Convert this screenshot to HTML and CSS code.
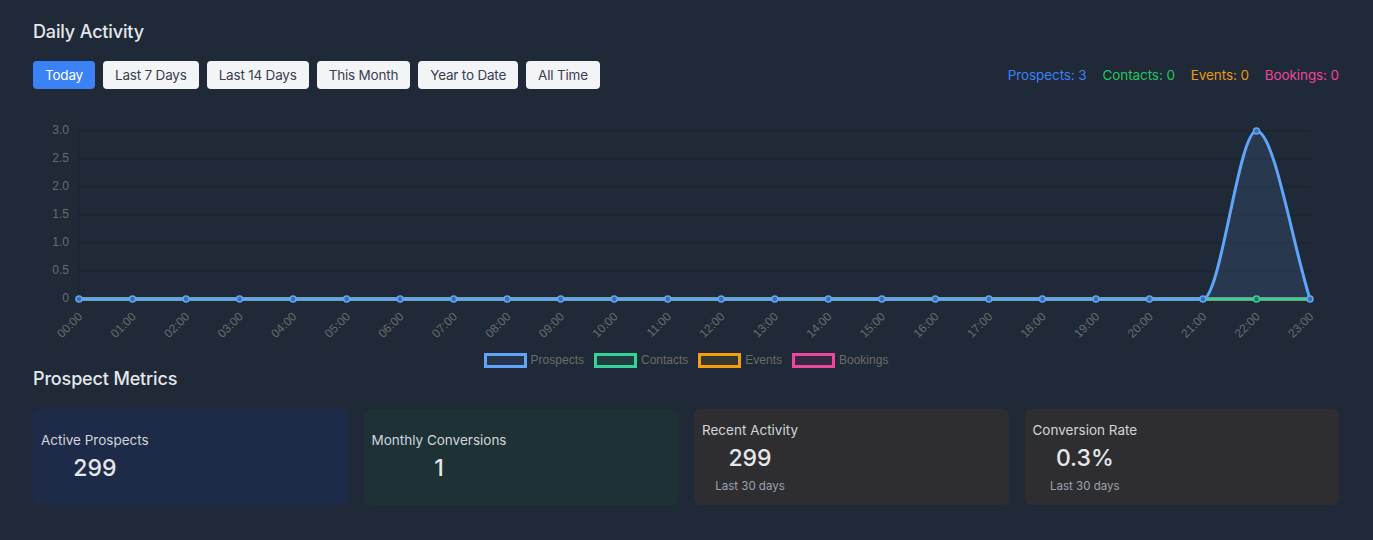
FILE: index.html
```html
<!DOCTYPE html>
<html lang="en">
<head>
<meta charset="utf-8">
<title>Daily Activity</title>
<link rel="stylesheet" href="styles.css">
</head>
<body>
<main class="page">
  <section class="activity">
    <h2 class="section-title">Daily Activity</h2>
    <div class="toolbar">
      <div class="ranges">
        <button class="range active">Today</button>
        <button class="range">Last 7 Days</button>
        <button class="range">Last 14 Days</button>
        <button class="range">This Month</button>
        <button class="range">Year to Date</button>
        <button class="range">All Time</button>
      </div>
      <div class="totals">
        <span class="total t-prospects">Prospects: 3</span>
        <span class="total t-contacts">Contacts: 0</span>
        <span class="total t-events">Events: 0</span>
        <span class="total t-bookings">Bookings: 0</span>
      </div>
    </div>
    <div class="chart">
      <svg class="chart-svg" width="1306" height="264" viewBox="0 0 1306 264">
        <g class="grid">
          <line x1="46" y1="42" x2="1277" y2="42"/>
          <line x1="46" y1="70" x2="1277" y2="70"/>
          <line x1="46" y1="98" x2="1277" y2="98"/>
          <line x1="46" y1="126" x2="1277" y2="126"/>
          <line x1="46" y1="154" x2="1277" y2="154"/>
          <line x1="46" y1="182" x2="1277" y2="182"/>
          <line x1="46" y1="42" x2="46" y2="210"/>
        </g>
        <g class="yticks">
          <text x="36" y="42">3.0</text>
          <text x="36" y="70">2.5</text>
          <text x="36" y="98">2.0</text>
          <text x="36" y="126">1.5</text>
          <text x="36" y="154">1.0</text>
          <text x="36" y="182">0.5</text>
          <text x="36" y="210">0</text>
        </g>
        <g class="xticks">
          <text transform="translate(48,226) rotate(-45)">00:00</text>
          <text transform="translate(101.52,226) rotate(-45)">01:00</text>
          <text transform="translate(155.04,226) rotate(-45)">02:00</text>
          <text transform="translate(208.57,226) rotate(-45)">03:00</text>
          <text transform="translate(262.09,226) rotate(-45)">04:00</text>
          <text transform="translate(315.61,226) rotate(-45)">05:00</text>
          <text transform="translate(369.13,226) rotate(-45)">06:00</text>
          <text transform="translate(422.65,226) rotate(-45)">07:00</text>
          <text transform="translate(476.17,226) rotate(-45)">08:00</text>
          <text transform="translate(529.70,226) rotate(-45)">09:00</text>
          <text transform="translate(583.22,226) rotate(-45)">10:00</text>
          <text transform="translate(636.74,226) rotate(-45)">11:00</text>
          <text transform="translate(690.26,226) rotate(-45)">12:00</text>
          <text transform="translate(743.78,226) rotate(-45)">13:00</text>
          <text transform="translate(797.30,226) rotate(-45)">14:00</text>
          <text transform="translate(850.83,226) rotate(-45)">15:00</text>
          <text transform="translate(904.35,226) rotate(-45)">16:00</text>
          <text transform="translate(957.87,226) rotate(-45)">17:00</text>
          <text transform="translate(1011.39,226) rotate(-45)">18:00</text>
          <text transform="translate(1064.91,226) rotate(-45)">19:00</text>
          <text transform="translate(1118.43,226) rotate(-45)">20:00</text>
          <text transform="translate(1171.96,226) rotate(-45)">21:00</text>
          <text transform="translate(1225.48,226) rotate(-45)">22:00</text>
          <text transform="translate(1279.00,226) rotate(-45)">23:00</text>
        </g>
        <path class="line-bookings" d="M46,210 H1277"/>
        <path class="line-events" d="M46,210 H1277"/>
        <path class="line-contacts" d="M46,210 H1277"/>
        <circle class="pt-contacts" cx="1223.48" cy="210" r="3"/>
        <path class="area-prospects" d="M46,210 L1169.96,210 C1187.80,210 1205.64,42 1223.48,42 C1241.32,42 1259.16,154 1277,210 Z"/>
        <path class="line-prospects" d="M46,210 L1169.96,210 C1187.80,210 1205.64,42 1223.48,42 C1241.32,42 1259.16,154 1277,210"/>
        <g class="pts-prospects">
          <circle cx="46" cy="210" r="3"/>
          <circle cx="99.52" cy="210" r="3"/>
          <circle cx="153.04" cy="210" r="3"/>
          <circle cx="206.57" cy="210" r="3"/>
          <circle cx="260.09" cy="210" r="3"/>
          <circle cx="313.61" cy="210" r="3"/>
          <circle cx="367.13" cy="210" r="3"/>
          <circle cx="420.65" cy="210" r="3"/>
          <circle cx="474.17" cy="210" r="3"/>
          <circle cx="527.70" cy="210" r="3"/>
          <circle cx="581.22" cy="210" r="3"/>
          <circle cx="634.74" cy="210" r="3"/>
          <circle cx="688.26" cy="210" r="3"/>
          <circle cx="741.78" cy="210" r="3"/>
          <circle cx="795.30" cy="210" r="3"/>
          <circle cx="848.83" cy="210" r="3"/>
          <circle cx="902.35" cy="210" r="3"/>
          <circle cx="955.87" cy="210" r="3"/>
          <circle cx="1009.39" cy="210" r="3"/>
          <circle cx="1062.91" cy="210" r="3"/>
          <circle cx="1116.43" cy="210" r="3"/>
          <circle cx="1169.96" cy="210" r="3"/>
          <circle cx="1223.48" cy="42" r="3"/>
          <circle cx="1277" cy="210" r="3"/>
        </g>
      </svg>
      <div class="legend">
        <span class="legend-item"><span class="swatch sw-prospects"></span>Prospects</span>
        <span class="legend-item"><span class="swatch sw-contacts"></span>Contacts</span>
        <span class="legend-item"><span class="swatch sw-events"></span>Events</span>
        <span class="legend-item"><span class="swatch sw-bookings"></span>Bookings</span>
      </div>
    </div>
  </section>

  <section class="metrics">
    <h2 class="section-title">Prospect Metrics</h2>
    <div class="cards">
      <div class="card card-blue">
        <div class="card-body">
          <div class="card-label">Active Prospects</div>
          <div class="card-value">299</div>
        </div>
      </div>
      <div class="card card-green">
        <div class="card-body">
          <div class="card-label">Monthly Conversions</div>
          <div class="card-value">1</div>
        </div>
      </div>
      <div class="card card-gray">
        <div class="card-body">
          <div class="card-label">Recent Activity</div>
          <div class="card-value">299</div>
          <div class="card-sub">Last 30 days</div>
        </div>
      </div>
      <div class="card card-gray">
        <div class="card-body">
          <div class="card-label">Conversion Rate</div>
          <div class="card-value">0.3%</div>
          <div class="card-sub">Last 30 days</div>
        </div>
      </div>
    </div>
  </section>
</main>
</body>
</html>
```
FILE: styles.css
```css
* {
  box-sizing: border-box;
}

html, body {
  margin: 0;
  background: #1f2937;
}

body {
  font-family: Inter, "Noto Sans", "Liberation Sans", sans-serif;
  color: #e5e7eb;
}

.page {
  padding: 21px 34px 0 33px;
}

.section-title {
  margin: 0;
  font-size: 18px;
  line-height: 22px;
  font-weight: 500;
  letter-spacing: -0.15px;
  color: #e5e7eb;
}

.toolbar {
  margin-top: 18px;
  display: flex;
  justify-content: space-between;
  align-items: center;
}

.ranges {
  display: flex;
  gap: 8px;
}

.range {
  height: 28px;
  padding: 0 12px;
  border: 0;
  border-radius: 4px;
  background: #f3f4f6;
  color: #374151;
  font-family: inherit;
  font-size: 13.5px;
  letter-spacing: -0.2px;
  line-height: 28px;
}

.range.active {
  background: #3b82f6;
  color: #ffffff;
}

.totals {
  display: flex;
  gap: 16px;
  font-size: 13.5px;
  letter-spacing: -0.1px;
  line-height: 20px;
}

.t-prospects { color: #3b82f6; }
.t-contacts { color: #22c55e; }
.t-events { color: #e99a12; }
.t-bookings { color: #ec4899; }

.chart-svg {
  display: block;
  font-family: "Liberation Sans", Arial, sans-serif;
  font-size: 12px;
}

.grid line {
  stroke: rgba(0, 0, 0, 0.14);
  stroke-width: 1;
}

.yticks text {
  fill: #6b6b6b;
  text-anchor: end;
  dominant-baseline: middle;
}

.xticks text {
  fill: #6b6b6b;
  text-anchor: end;
  dominant-baseline: middle;
}

.line-bookings, .line-events, .line-contacts, .line-prospects {
  fill: none;
  stroke-width: 3;
}

.line-bookings { stroke: #ec4899; }
.line-events { stroke: #f59e0b; }
.line-contacts { stroke: #34d399; }
.line-prospects { stroke: #60a5fa; stroke-linejoin: round; }

.area-prospects {
  fill: rgba(96, 165, 250, 0.13);
}

.pt-contacts {
  fill: #2a6b5a;
  stroke: #34d399;
  stroke-width: 1.5;
}

.pts-prospects circle {
  fill: #3b6fa8;
  stroke: #60a5fa;
  stroke-width: 1.5;
}

.legend {
  display: flex;
  justify-content: center;
  gap: 10px;
  height: 15px;
  font-family: "Liberation Sans", Arial, sans-serif;
  font-size: 12px;
  line-height: 15px;
  color: #6b6b6b;
}

.legend-item {
  display: flex;
  align-items: center;
}

.swatch {
  width: 43px;
  height: 15px;
  border: 3px solid;
  margin-right: 4px;
}

.sw-prospects { border-color: #60a5fa; background: #26354b; }
.sw-contacts { border-color: #34d399; background: #223b3f; }
.sw-events { border-color: #f59e0b; background: #37362f; }
.sw-bookings { border-color: #ec4899; background: #322a40; }

.cards {
  margin-top: 19px;
  display: grid;
  grid-template-columns: repeat(4, 1fr);
  gap: 16px;
}

.card {
  height: 96px;
  border-radius: 6px;
  padding: 0 8px;
  display: flex;
  align-items: center;
}

.card-blue { background: #1e2b48; }
.card-green { background: #1e3235; }
.card-gray { background: #2e2e31; }

.card-body {
  display: flex;
  flex-direction: column;
  align-items: center;
}

.card-label {
  font-size: 13.5px;
  line-height: 20px;
  color: #d1d5db;
}

.card-value {
  margin-top: 2px;
  font-size: 23px;
  line-height: 32px;
  font-weight: 500;
  color: #e5e7eb;
}

.card-sub {
  margin-top: 4px;
  font-size: 11.5px;
  line-height: 16px;
  color: #9ca3af;
}
```
